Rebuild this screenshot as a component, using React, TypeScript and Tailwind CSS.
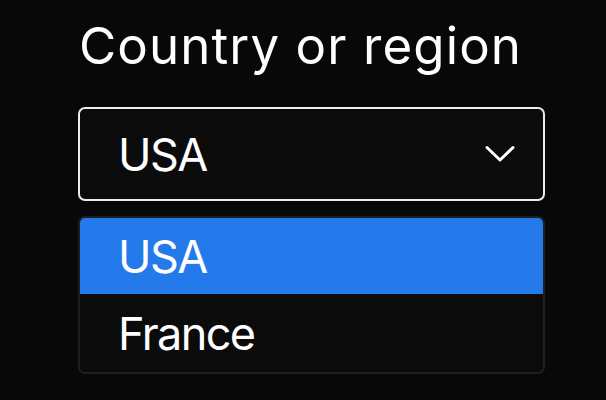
const options = ['USA', 'France'];

function Chevron() {
  return (
    <svg width="30" height="18" viewBox="0 0 30 18" fill="none" className="text-white">
      <path d="M2 2.5 L15 15 L28 2.5" stroke="currentColor" strokeWidth="3" strokeLinecap="round" strokeLinejoin="round" />
    </svg>
  );
}

export default function App() {
  const selected = 'USA';

  return (
    <div className="w-[606px] h-[400px] bg-[#080808] text-white font-['Inter',sans-serif] pl-[78px] pr-[61px] pt-[14px]">
      <h1 className="text-[51px] leading-[64px] font-normal tracking-[1.1px] pl-[1px]">Country or region</h1>

      <button className="mt-[29px] w-full h-[94px] flex items-center justify-between border-2 border-[#ececec] rounded-[7px] bg-[#0b0b0b] pl-[38px] pr-[28px]">
        <span className="text-[45px] leading-none tracking-[-1.6px]">{selected}</span>
        <Chevron />
      </button>

      <ul className="mt-[15px] w-full border-2 border-[#1f1f1f] rounded-[7px] bg-[#0b0b0b] overflow-hidden">
        {options.map((o) => (
          <li
            key={o}
            className={
              o === selected
                ? 'h-[76px] flex items-center pl-[38px] bg-[#247aeb] text-[45px] leading-none tracking-[-1.6px]'
                : 'h-[78px] flex items-center pl-[38px] text-[45px] leading-none tracking-[-1.6px]'
            }
          >
            {o}
          </li>
        ))}
      </ul>
    </div>
  );
}
